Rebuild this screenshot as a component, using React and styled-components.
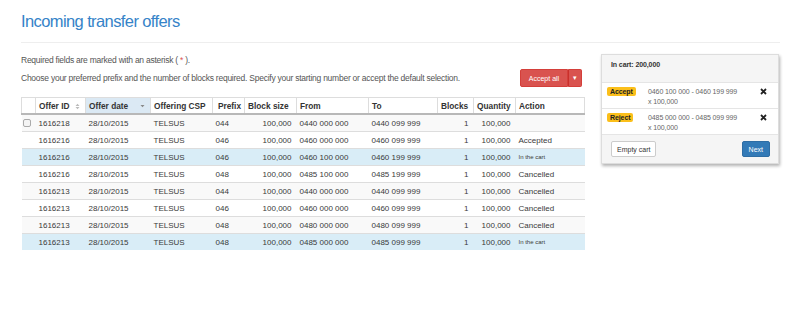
import React from "react";
import styled, { createGlobalStyle } from "styled-components";

const GlobalStyle = createGlobalStyle`
  body {
    margin: 0;
    background: #fff;
    font-family: "Liberation Sans", Arial, sans-serif;
    color: #333;
  }
`;

const Page = styled.div`
  width: 759px;
  padding-left: 21px;
`;

const Title = styled.h1`
  margin: 10px 0 0;
  font-size: 16.5px;
  line-height: 22px;
  letter-spacing: -0.6px;
  font-weight: normal;
  color: #3583c8;
`;

const Rule = styled.div`
  height: 1px;
  background: #eee;
  margin-top: 10px;
`;

const Main = styled.div`
  display: flex;
  align-items: flex-start;
  gap: 17px;
  margin-top: 11px;
`;

const Left = styled.div`
  width: 563px;
`;

const Note = styled.p`
  margin: 0;
  font-size: 8.5px;
  line-height: 12px;
  letter-spacing: -0.25px;
  color: #555;
`;

const Asterisk = styled.span`
  color: #d9534f;
`;

const Intro = styled.div`
  display: flex;
  justify-content: space-between;
  align-items: center;
  margin-top: 3px;
`;

const SplitButton = styled.div`
  display: flex;
  height: 18px;
  margin-right: 2px;
`;

const SplitPart = styled.button`
  background: #d9534f;
  border: 1px solid #d43f3a;
  color: #fff;
  font-family: inherit;
  font-size: 7px;
  padding: 0;
  width: ${(p) => (p.$caret ? "14px" : "48px")};
  border-radius: ${(p) => (p.$caret ? "0 2px 2px 0" : "2px 0 0 2px")};
  border-left-color: ${(p) => (p.$caret ? "#c9302c" : "#d43f3a")};
`;

const Table = styled.table`
  width: 563px;
  table-layout: fixed;
  border-collapse: collapse;
  margin-top: 10px;
  font-size: 8px;
  color: #3a3a3a;
`;

const Th = styled.th`
  height: 15px;
  padding: 0 3px;
  text-align: ${(p) => p.$align || "left"};
  font-size: 8.3px;
  font-weight: bold;
  color: #333;
  white-space: nowrap;
  border: 1px solid #ddd;
  border-bottom: 2px solid #b8b8b8;
  background: ${(p) => (p.$sorted ? "#dbe9f4" : "#fff")};
`;

const SortIcon = styled.svg`
  margin-left: ${(p) => p.$gap}px;
  vertical-align: middle;
`;

const Tr = styled.tr`
  background: ${(p) => (p.$cart ? "#d9edf7" : p.$striped ? "#f9f9f9" : "#fff")};
`;

const Td = styled.td`
  height: 16px;
  padding: 0 ${(p) => (p.$align === "right" ? "5px" : "3px")} 0 ${(p) => (p.$tight ? "1px" : "3px")};
  text-align: ${(p) => p.$align || "left"};
  font-size: ${(p) => (p.$small ? "6px" : "8px")};
  white-space: nowrap;
  border-top: 1px solid #ddd;
`;

const Check = styled.span`
  display: inline-block;
  width: 6px;
  height: 6px;
  border: 1px solid #aaa;
  border-radius: 2px;
  background: #f4f4f4;
  vertical-align: middle;
`;

const Cart = styled.div`
  width: 178px;
  box-sizing: border-box;
  border: 1px solid #ddd;
  box-shadow: 1px 2px 3px rgba(0, 0, 0, 0.3);
  font-size: 7px;
  letter-spacing: -0.1px;
  color: #333;
`;

const CartHead = styled.div`
  height: 28px;
  box-sizing: border-box;
  padding: 6px 9px 0;
  background: #f5f5f5;
  font-weight: bold;
  border-bottom: 1px solid #e5e5e5;
`;

const CartItem = styled.div`
  display: grid;
  grid-template-columns: 41px 1fr 20px;
  height: 26px;
  box-sizing: border-box;
  padding: 4px 5px 0;
  border-bottom: 1px solid #e5e5e5;
`;

const Badge = styled.span`
  align-self: start;
  justify-self: start;
  background: #fbbf1a;
  color: #222;
  font-weight: bold;
  padding: 0 3px;
  line-height: 9px;
  border-radius: 2px;
`;

const Range = styled.div`
  color: #666;
  line-height: 9.5px;
`;

const Remove = styled.svg`
  justify-self: center;
  margin-top: 1px;
`;

const CartFoot = styled.div`
  display: flex;
  justify-content: space-between;
  padding: 6px 8px 6px 9px;
  background: #f5f5f5;
`;

const Button = styled.button`
  height: 16px;
  padding: 0 ${(p) => (p.$primary ? "6px" : "5px")};
  font-family: inherit;
  font-size: 7px;
  border-radius: 2px;
  border: 1px solid ${(p) => (p.$primary ? "#2e6da4" : "#ccc")};
  background: ${(p) => (p.$primary ? "#337ab7" : "#fff")};
  color: ${(p) => (p.$primary ? "#fff" : "#333")};
`;

const rows = [
  { id: "1616218", prefix: "044", from: "0440 000 000", to: "0440 099 999", action: "", checkbox: true },
  { id: "1616216", prefix: "046", from: "0460 000 000", to: "0460 099 999", action: "Accepted" },
  { id: "1616216", prefix: "046", from: "0460 100 000", to: "0460 199 999", action: "In the cart", cart: true },
  { id: "1616216", prefix: "048", from: "0485 100 000", to: "0485 199 999", action: "Cancelled" },
  { id: "1616213", prefix: "044", from: "0440 000 000", to: "0440 099 999", action: "Cancelled" },
  { id: "1616213", prefix: "046", from: "0460 000 000", to: "0460 099 999", action: "Cancelled" },
  { id: "1616213", prefix: "048", from: "0480 000 000", to: "0480 099 999", action: "Cancelled" },
  { id: "1616213", prefix: "048", from: "0485 000 000", to: "0485 099 999", action: "In the cart", cart: true },
];

const cols = [14, 50, 65, 62, 32, 52, 72, 69, 36, 42, 69];

const cartItems = [
  { kind: "Accept", range: "0460 100 000 - 0460 199 999" },
  { kind: "Reject", range: "0485 000 000 - 0485 099 999" },
];

const BothWays = () => (
  <SortIcon $gap={6} width="5" height="7" viewBox="0 0 5 7">
    <path d="M0.5 3 L2.5 0.8 L4.5 3 Z M0.5 4 L2.5 6.2 L4.5 4 Z" fill="#bbb" />
  </SortIcon>
);

const Down = () => (
  <SortIcon $gap={12} width="5" height="4" viewBox="0 0 5 4">
    <path d="M0.5 1 L2.5 3.3 L4.5 1 Z" fill="#888" />
  </SortIcon>
);

const App = () => {
  return (
    <Page>
      <GlobalStyle />
      <Title>Incoming transfer offers</Title>
      <Rule />
      <Main>
        <Left>
          <Note>
            Required fields are marked with an asterisk ( <Asterisk>*</Asterisk> ).
          </Note>
          <Intro>
            <Note>
              Choose your preferred prefix and the number of blocks required. Specify your starting number or accept the default selection.
            </Note>
            <SplitButton>
              <SplitPart>Accept all</SplitPart>
              <SplitPart $caret>▾</SplitPart>
            </SplitButton>
          </Intro>
          <Table>
            <colgroup>
              {cols.map((w, i) => (
                <col key={i} style={{ width: w }} />
              ))}
            </colgroup>
            <thead>
              <tr>
                <Th />
                <Th>
                  Offer ID
                  <BothWays />
                </Th>
                <Th $sorted>
                  Offer date
                  <Down />
                </Th>
                <Th>Offering CSP</Th>
                <Th $align="right">Prefix</Th>
                <Th>Block size</Th>
                <Th>From</Th>
                <Th>To</Th>
                <Th>Blocks</Th>
                <Th>Quantity</Th>
                <Th>Action</Th>
              </tr>
            </thead>
            <tbody>
              {rows.map((r, i) => (
                <Tr key={i} $striped={i % 2 === 0} $cart={r.cart}>
                  <Td $tight>{r.checkbox && <Check />}</Td>
                  <Td>{r.id}</Td>
                  <Td>28/10/2015</Td>
                  <Td>TELSUS</Td>
                  <Td>{r.prefix}</Td>
                  <Td $align="right">100,000</Td>
                  <Td>{r.from}</Td>
                  <Td>{r.to}</Td>
                  <Td $align="right">1</Td>
                  <Td $align="right">100,000</Td>
                  <Td $small={r.cart}>{r.action}</Td>
                </Tr>
              ))}
            </tbody>
          </Table>
        </Left>
        <Cart>
          <CartHead>In cart: 200,000</CartHead>
          {cartItems.map((c) => (
            <CartItem key={c.kind}>
              <Badge>{c.kind}</Badge>
              <Range>
                {c.range}
                <br />x 100,000
              </Range>
              <Remove width="7" height="7" viewBox="0 0 7 7">
                <path d="M1 1 L6 6 M6 1 L1 6" stroke="#222" strokeWidth="1.8" />
              </Remove>
            </CartItem>
          ))}
          <CartFoot>
            <Button>Empty cart</Button>
            <Button $primary>Next</Button>
          </CartFoot>
        </Cart>
      </Main>
    </Page>
  );
};

export default App;
